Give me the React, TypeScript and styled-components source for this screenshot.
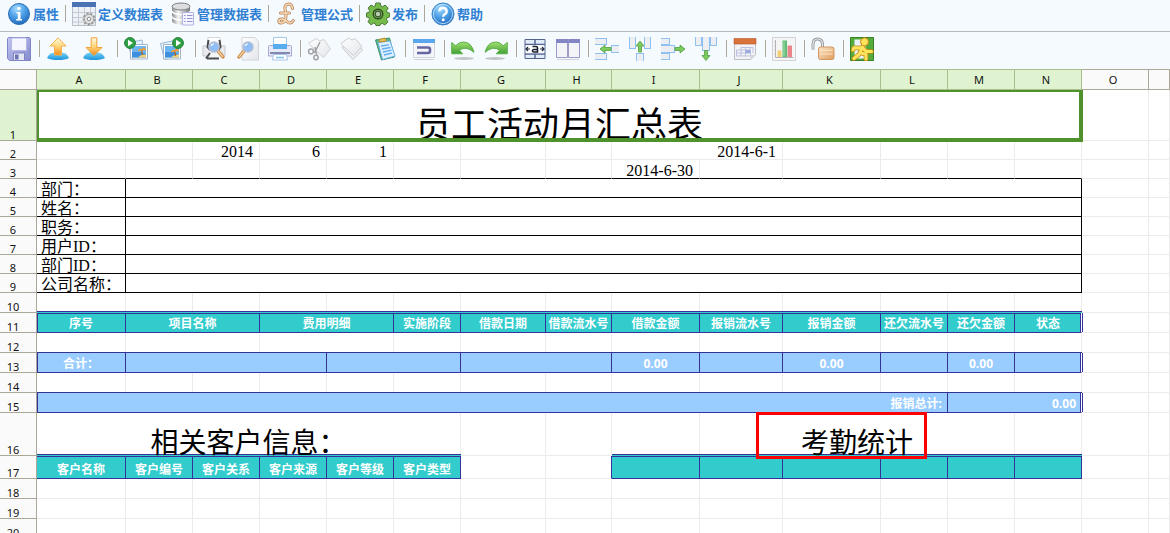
import React from "react";
import styled, { createGlobalStyle, css } from "styled-components";

const INK = "#333399";
const TEAL = "#33cccc";
const SKY = "#99ccff";
const GRID = "#ebebeb";
const HEAD_LINE = "#aca899";

const GlobalStyle = createGlobalStyle`
  *, *::before, *::after { box-sizing: border-box; }
  body { margin: 0; background: #fff; }
`;

const Page = styled.div`
  position: relative;
  display: flex;
  flex-direction: column;
  height: 100vh;
  overflow: hidden;
  font-family: "Noto Sans", "Noto Sans CJK SC", sans-serif;
`;

const MenuBar = styled.nav`
  display: flex;
  align-items: center;
  flex: none;
  height: 32px;
  padding: 0 7px 4px;
  background: #f5faff;
  border-bottom: 1px solid #b4b9c0;
`;

const ToolBar = styled.div`
  display: flex;
  align-items: center;
  flex: none;
  height: 37px;
  padding: 0 7px 4px;
  background: #f5faff;
`;

const Divider = styled.span<{ $before?: number }>`
  flex: none;
  width: 1px;
  height: 17px;
  margin: 0 6px 0 ${(p) => p.$before ?? 6}px;
  background: #aca899;
`;

const MenuButton = styled.button`
  display: flex;
  align-items: center;
  flex: none;
  gap: 2px;
  height: 24px;
  padding: 0;
  border: 0;
  background: none;
  color: #2f7fd2;
  font: bold 13px/24px "Noto Sans CJK SC", sans-serif;
  white-space: nowrap;
  cursor: pointer;
`;

const MenuGroup = styled.div`
  display: flex;
  flex: none;
  gap: 8px;
`;

const ToolGroup = styled.div<{ $gap?: number }>`
  display: flex;
  flex: none;
  gap: ${(p) => p.$gap ?? 9}px;
`;

const ToolButton = styled.button`
  display: block;
  width: 24px;
  height: 24px;
  padding: 0;
  border: 0;
  background: none;
  cursor: pointer;
`;

const Glyph = styled.svg`
  display: block;
  width: 24px;
  height: 24px;
`;

const SharedDefs = styled.svg`
  display: block;
  width: 0;
  height: 0;
`;

const SheetArea = styled.main`
  flex: 1;
  min-height: 0;
  overflow: hidden;
`;

const Sheet = styled.table`
  width: 100%;
  min-width: 1150px;
  table-layout: fixed;
  border-collapse: separate;
  border-spacing: 0;
`;

const headCell = css<{ $active?: boolean }>`
  background: ${(p) => (p.$active ? "#dff3d0" : "#fafafa")};
  border-right: 1px solid ${HEAD_LINE};
  border-bottom: 1px solid ${HEAD_LINE};
  color: #111;
  font: 11px/12px "Noto Sans", sans-serif;
  text-align: center;
`;

const ColHead = styled.th<{ $active?: boolean }>`
  ${headCell}
  height: 21px;
  padding: 0 4px 0 0;
  border-top: 1px solid ${(p) => (p.$active ? "#a9bd8d" : HEAD_LINE)};
  border-bottom-color: ${(p) => (p.$active ? "#a9bd8d" : HEAD_LINE)};
  border-right-color: ${(p) => (p.$active ? "#a9bd8d" : HEAD_LINE)};
`;

const RowHead = styled.th<{ $active?: boolean }>`
  ${headCell}
  padding: 0 10px 0 0;
  line-height: 10px;
  vertical-align: bottom;
`;

const Row = styled.tr<{ $height: number }>`
  height: ${(p) => p.$height}px;
`;

type Kind = "plain" | "title" | "heading" | "value" | "label" | "form" | "head" | "total";

interface CellStyle {
  $kind: Kind;
  $align: "left" | "center" | "right";
  $line: string;
  $first: boolean;
  $last: boolean;
  $doubleEdge: boolean;
}

const boldText = css`
  padding-bottom: 2px;
  border-color: ${INK};
  color: #fff;
  font: bold 12px/12px "Open Sans", "Noto Sans CJK SC", sans-serif;
`;

const kindStyles = {
  plain: css``,
  title: css`
    font: 36px/36px "Noto Sans CJK SC", sans-serif;
    position: relative;
    &::after {
      content: "";
      position: absolute;
      inset: 0 -2px -2px 0;
      border: solid #4f912b;
      border-width: 2px 4px 4px 2px;
    }
  `,
  heading: css`
    font: 28px/28px "Noto Sans CJK SC", sans-serif;
  `,
  value: css`
    font: 16px/14px "Liberation Serif", serif;
    padding-right: 6px;
  `,
  label: css`
    font: 16px/14px "Liberation Serif", "Noto Sans CJK SC", sans-serif;
    padding-left: 4px;
    border-color: #000;
  `,
  form: css`
    border-color: #000;
  `,
  head: css`
    ${boldText}
    background: ${TEAL};
  `,
  total: css`
    ${boldText}
    background: ${SKY};
  `,
};

const edgeLines = (p: CellStyle) => {
  const lines: string[] = [];
  if (p.$kind === "head") lines.push(`inset 0 1px ${INK}`, `0 -1px ${TEAL}`, `0 -2px ${INK}`);
  if (p.$kind === "total") lines.push(`0 -1px ${INK}`);
  if (p.$doubleEdge && p.$first) lines.push(`inset 1px 0 ${INK}`);
  if (p.$doubleEdge && p.$last) lines.push(`inset -1px 0 ${INK}`, `1px 0 ${INK}`);
  return lines.length ? lines.join(", ") : "none";
};

const Cell = styled.td<CellStyle>`
  padding: 0;
  border-style: solid;
  border-width: 0 1px 1px 0;
  border-color: ${(p) => p.$line};
  color: #000;
  text-align: ${(p) => p.$align};
  vertical-align: bottom;
  white-space: nowrap;
  ${(p) => kindStyles[p.$kind]}
  ${(p) => p.$kind === "value" && `border-color: ${p.$line};`}
  ${(p) => p.$kind === "total" && p.$align === "right" && "padding-right: 5px;"}
  ${(p) => p.$doubleEdge && p.$last && "border-right-color: #fff;"}
  box-shadow: ${edgeLines};
`;

const Marker = styled.div`
  position: absolute;
  left: 756px;
  top: 412px;
  width: 171px;
  height: 47px;
  border: 3px solid #f00;
  pointer-events: none;
`;

/* ---------- icons ---------- */

const Defs = () => (
  <SharedDefs aria-hidden="true">
    <defs>
      <radialGradient id="ball" cx=".4" cy=".25" r=".8">
        <stop offset="0" stopColor="#a8dcff" />
        <stop offset=".5" stopColor="#4b9fe6" />
        <stop offset="1" stopColor="#1f66b8" />
      </radialGradient>
      <linearGradient id="sun" x1="0" y1="0" x2="0" y2="1">
        <stop offset="0" stopColor="#fffbe0" />
        <stop offset=".5" stopColor="#ffd679" />
        <stop offset="1" stopColor="#f58a1c" />
      </linearGradient>
      <linearGradient id="dome" x1="0" y1="0" x2="0" y2="1">
        <stop offset="0" stopColor="#7fd4f8" />
        <stop offset="1" stopColor="#1b94dc" />
      </linearGradient>
      <linearGradient id="leaf" x1="0" y1="0" x2="0" y2="1">
        <stop offset="0" stopColor="#a4e070" />
        <stop offset="1" stopColor="#3f9f35" />
      </linearGradient>
      <linearGradient id="metal" x1="0" y1="0" x2="1" y2="0">
        <stop offset="0" stopColor="#8d8f92" />
        <stop offset=".35" stopColor="#f4f4f4" />
        <stop offset="1" stopColor="#77797c" />
      </linearGradient>
      <linearGradient id="paper" x1="0" y1="0" x2="1" y2="1">
        <stop offset="0" stopColor="#ffffff" />
        <stop offset="1" stopColor="#e3e5e9" />
      </linearGradient>
      <linearGradient id="lilac" x1="0" y1="0" x2="1" y2="1">
        <stop offset="0" stopColor="#c3c6f4" />
        <stop offset="1" stopColor="#8389cc" />
      </linearGradient>
      <linearGradient id="peach" x1="0" y1="0" x2="1" y2="1">
        <stop offset="0" stopColor="#fde8cc" />
        <stop offset="1" stopColor="#e09a5c" />
      </linearGradient>
    </defs>
  </SharedDefs>
);

const Lens = ({ x, y, flip }: { x: number; y: number; flip?: boolean }) => {
  const s = flip ? -1 : 1;
  return (
    <g>
      <path d={`M${x + 4 * s} ${y + 4}L${x + 9 * s} ${y + 10}`} stroke="#c98441" strokeWidth="3.4" strokeLinecap="round" />
      <path d={`M${x + 4 * s} ${y + 4}L${x + 9 * s} ${y + 10}`} stroke="#f8d3a3" strokeWidth="1.4" />
      <circle cx={x} cy={y} r="5" fill="#8fbdf7" stroke="#b4bfd6" strokeWidth="1.6" />
      <path d={`M${x - 3} ${y - 1}a3 3 0 0 1 3-2`} stroke="#fff" strokeWidth="1.2" />
    </g>
  );
};

const Palm = () => (
  <>
    <path d="M18.5 18l-.8-5" stroke="#b56a22" strokeWidth="1.4" />
    <path d="M14.500 14q1-3 3.200-1.500Q19.500 9.500 22 13q-2-1-4 0-2-.5-3.500 1z" fill="#f59d2d" stroke="#f59d2d" />
  </>
);

const PlayBadge = ({ x }: { x: number }) => (
  <>
    <circle cx={x} cy="6" r="5.4" fill="#2fa044" stroke="#1c7c30" />
    <path d={`M${x - 2} 2.800v6.400l5-3.200z`} fill="#fff" />
  </>
);

const Bar = ({ x, y, w, h }: { x: number; y: number; w: number; h: number }) => (
  <rect x={x + 0.5} y={y + 0.5} width={w - 1} height={h - 1} fill="#eceef2" stroke="#8fc0f2" />
);

const manBody = "M12.500 11L3.800 10.800 3 13M12.500 11l4 3.500h5M12.500 10l-3 7L4 21.500M10 15.500l6 2v4.500";

const shapes: Record<string, React.ReactNode> = {
  info: (
    <>
      <circle cx="12" cy="12" r="10.500" fill="url(#ball)" stroke="#2a6fb8" />
      <circle cx="12" cy="6.500" r="1.700" fill="#fff" />
      <path d="M9.500 10h4v7h1.500v1.500H9.200V17h1.600v-5.500H9.500z" fill="#fff" />
    </>
  ),
  help: (
    <>
      <circle cx="12" cy="12" r="11" fill="url(#ball)" stroke="#3b83c9" />
      <circle cx="12" cy="12" r="9.600" stroke="#cfeaff" strokeWidth=".8" />
      <path d="M8.300 9.300Q8.500 6 12 6t3.700 3.200q0 2-2 3.100-1.500.9-1.500 2.400" stroke="#fff" strokeWidth="2.400" />
      <circle cx="12.200" cy="17.800" r="1.500" fill="#fff" />
    </>
  ),
  defineTable: (
    <>
      <path d="M.5.500h23v23H.500z" fill="#eef1f5" stroke="#b7bfca" />
      <path d="M0 0h24v5H0z" fill="#4a74b4" />
      <path d="M1 10.500h22M1 15.500h22M1 20h22M6.500 5v18M12.500 5v18M18.500 5v18" stroke="#c3cad3" />
      <circle cx="17" cy="17" r="5.400" fill="#dcdcdc" stroke="#979797" strokeWidth="2" strokeDasharray="2.200 1.500" />
      <circle cx="17" cy="17" r="4.600" fill="#e6e6e6" stroke="#a8a8a8" />
      <circle cx="17" cy="17" r="1.800" fill="#fff" stroke="#8b8b8b" />
    </>
  ),
  database: (
    <>
      <path d="M1 4v15c0 2 4 3.500 9 3.500s9-1.500 9-3.500V4z" fill="url(#metal)" />
      <path d="M1 9c0 2 4 3.500 9 3.500S19 11 19 9M1 14.500C1 16.500 5 18 10 18s9-1.500 9-3.500" stroke="#fff" strokeWidth="1.600" />
      <ellipse cx="10" cy="4.500" rx="9" ry="3.500" fill="#dcdddf" stroke="#7d7f82" />
      <path d="M11.500 10.500h11v12.500h-11z" fill="#f4f4ff" stroke="#b4b4e0" />
      <path d="M13 13.500h1.500M16 13.500h5.500M13 16.500h1.500M16 16.500h5.500M13 19.500h1.500M16 19.500h5.500" stroke="#9494cc" />
    </>
  ),
  pound: (
    <>
      <path d="M17.500 6.500Q17 2 13.500 2 9.500 2 10 7q1.500 5 .8 9-1 5-5 5-2-.2-2-2 .5-2.500 3.500-2 3 .8 6 3.500 3 1.500 5-2M5.500 11h9" stroke="#b98254" strokeWidth="3" strokeLinecap="round" />
      <path d="M17.500 6.500Q17 2 13.500 2 9.500 2 10 7q1.500 5 .8 9-1 5-5 5-2-.2-2-2 .5-2.500 3.500-2 3 .8 6 3.500 3 1.500 5-2M5.500 11h9" stroke="#f6d9b6" strokeWidth="1.500" strokeLinecap="round" />
    </>
  ),
  gear: (
    <>
      <path d="M9.800 1h4.400l.7 3 1.600.7 2.700-1.600 3 3-1.700 2.700.7 1.600 2.500.7v3.800l-2.600.8-.7 1.600 1.500 2.700-3 3-2.700-1.600-1.600.6-.6 1.500H10l-.8-1.800-1.600-.6L5 22.800l-3-3 1.500-2.600-.7-1.600L.5 15v-4l2.500-.7.600-1.600L2.100 6l3-3 2.600 1.600L9.200 4z" fill="#74bb4b" stroke="#4b7a34" />
      <circle cx="12" cy="12" r="4.800" fill="#7fc454" stroke="#2f4a26" strokeWidth="1.400" />
      <circle cx="12" cy="12" r="2.800" fill="#b9cdb0" stroke="#3c5432" strokeWidth="1.200" />
    </>
  ),
  save: (
    <>
      <path d="M1.500.500h21l1 1v22h-21l-2-2v-20z" fill="url(#lilac)" stroke="#7f85c6" />
      <path d="M4.500 1h15v12.500h-15z" fill="#f4f5ff" stroke="#b3b7e6" />
      <path d="M6.500 16h11v7.500h-11z" fill="#e4e6f4" stroke="#8085c4" />
      <path d="M8 17.500h3.500v5H8z" fill="#6c72b4" />
    </>
  ),
  up: (
    <>
      <path d="M1 21q2-6 11-6t11 6q-4 2-11 2T1 21z" fill="url(#dome)" />
      <path d="M12 .8l8 8.200h-4.500v9h-7V9H4z" fill="url(#sun)" stroke="#f4b04c" />
    </>
  ),
  down: (
    <>
      <path d="M1 21q2-6 11-6t11 6q-4 2-11 2T1 21z" fill="url(#dome)" />
      <path d="M12 18.500L4 10.500h5.200V.8h5.600v9.700H20z" fill="url(#sun)" stroke="#f0a23c" />
    </>
  ),
  playLeft: (
    <>
      <path d="M4 6l14-3 3 16-13 3z" fill="#e8f3fd" stroke="#9ab7d4" />
      <path d="M6.500 7.500h17v14.500h-17z" fill="#fff" stroke="#a3b4c6" />
      <path d="M8 9h14v11.500H8z" fill="#6db6f2" />
      <path d="M8 15h8l6 2v3.500H8z" fill="#3e8fdd" />
      <path d="M14 20.500q3-3.500 8-3v3z" fill="#f2d37c" />
      <Palm />
      <PlayBadge x={6} />
    </>
  ),
  playRight: (
    <>
      <path d="M.5 6.500l14-3 3 16-13 3z" fill="#e8f3fd" stroke="#9ab7d4" />
      <path d="M3.500 7.500h17v14.500h-17z" fill="#fff" stroke="#a3b4c6" />
      <path d="M5 9h14v11.500H5z" fill="#6db6f2" />
      <path d="M5 15h8l6 2v3.500H5z" fill="#3e8fdd" />
      <path d="M11 20.500q3-3.500 8-3v3z" fill="#f2d37c" />
      <g transform="translate(-3 1)">
        <Palm />
      </g>
      <PlayBadge x={18} />
    </>
  ),
  preview: (
    <>
      <path d="M1 9h22v10H1z" fill="#e8eaee" stroke="#c5c8ce" />
      <path d="M6 .500h12V11H6z" fill="#fff" stroke="#d4d7dc" />
      <path d="M5 21l3-5h8l3 5z" fill="#f2f4f6" />
      <path d="M6.500 3L5.500 10l2.500 3M17.500 3l1 7-2.500 3M4 21.500l4-5.500M19 16l1 3M5 21.500h12" stroke="#4a4c50" strokeWidth="2" />
      <Lens x={12} y={10} />
    </>
  ),
  zoomPage: (
    <>
      <path d="M7 .5h13l3.500 4V23H7z" fill="url(#paper)" stroke="#d2d4d8" />
      <Lens x={13} y={10} flip />
    </>
  ),
  print: (
    <>
      <path d="M5.500.500h13v9h-13z" fill="#fff" stroke="#a9c6e6" />
      <path d="M1.500 8.500h21q1 0 1 1V19h-23V9.500q0-1 1-1z" fill="#e6eaf8" stroke="#a5add2" />
      <path d="M5 7h14v5H5z" fill="#56aef0" />
      <path d="M2 15h20v2H2z" fill="#8188b4" />
      <path d="M5.500 17.500h13l1 5.500h-15z" fill="#fff" stroke="#a9c6e6" />
      <path d="M8 20.500h8" stroke="#7cc0f0" strokeWidth="1.500" />
    </>
  ),
  cut: (
    <>
      <path d="M1.500 6l8-4.500 3 2.500L17 2.500l6.500 9.500-7 8.500L5 10z" fill="url(#paper)" stroke="#cfd0d3" />
      <path d="M13 5L7.500 16M8 10l2 9" stroke="#9da0a4" strokeWidth="1.400" />
      <circle cx="4" cy="14.500" r="2.400" stroke="#a2a4a8" strokeWidth="1.500" />
      <circle cx="9" cy="20.500" r="2.200" stroke="#a2a4a8" strokeWidth="1.500" />
      <path d="M6 15l3-1" stroke="#a2a4a8" strokeWidth="1.400" />
    </>
  ),
  copy: (
    <>
      <path d="M2 10.500l11 12L22.500 13l-2.500-3-8-4z" fill="#eeeff0" stroke="#c6c7ca" />
      <path d="M1 6.500L8.500 1 12 3l3-1.500L22 9.500l-8.500 9L3 9z" fill="url(#paper)" stroke="#cbccd0" />
    </>
  ),
  paste: (
    <>
      <path d="M2.500 3l14-2 5 19-13 3z" fill="#59b78a" stroke="#3d946c" />
      <path d="M5 5.500l12-1.500 5 15-12.500 3.500z" fill="#dff0ff" stroke="#6db0ea" />
      <path d="M8 9l8-1.200M9 12l8.500-1.500M10 15l8.500-1.800M11 18l8-2" stroke="#62aef0" strokeWidth="1.300" />
      <path d="M6 2.500l6-1.500 1.500 3-7 1z" fill="#e7c25a" stroke="#b9922e" />
    </>
  ),
  link: (
    <>
      <path d="M1.500 2.500h21v18h-21z" fill="#f4f5f8" stroke="#d3d6de" />
      <path d="M1 2h22v4H1z" fill="#58a7ee" />
      <path d="M5 10.500h11q2 0 2 2v1.500q0 2-2 2H5" stroke="#6668a4" strokeWidth="2.600" />
      <path d="M2 22.500h20" stroke="#d0d3da" />
    </>
  ),
  undo: (
    <>
      <ellipse cx="13" cy="21.500" rx="10" ry="1.500" fill="#c2c5c8" />
      <path d="M.7 5.500v11.300h11L8.500 13.300q6-5 14.500 2Q20.500 5 12 5 8 5 4.800 8.800z" fill="url(#leaf)" stroke="#5cb04a" />
    </>
  ),
  redo: (
    <>
      <ellipse cx="11" cy="21.500" rx="10" ry="1.500" fill="#c2c5c8" />
      <path d="M23.300 5.500v11.300h-11l3.200-3.500q-6-5-14.500 2Q3.500 5 12 5q4 0 7.200 3.800z" fill="url(#leaf)" stroke="#5cb04a" />
    </>
  ),
  merge: (
    <>
      <path d="M2 2.500h20v19H2z" fill="#e2ebfa" stroke="#53648f" />
      <path d="M2 7.500h20M2 17h20M12 2v5.500M12 17v5" stroke="#53648f" strokeWidth="1.500" />
      <path d="M2.800 8.200h18.400v8H2.800z" fill="#fff" />
      <path d="M3 12h4M5 10l-2 2 2 2M21 12h-4M19 10l2 2-2 2" stroke="#222b40" strokeWidth="1.200" />
      <path d="M9.500 9.500h3.500q1.500 0 1.500 1.500v4H11q-1.500 0-1.500-1.300T11 12.500h3" stroke="#1c2233" strokeWidth="1.600" />
    </>
  ),
  split: (
    <>
      <path d="M.5 2.500h11v18H.500zM12.500 2.500h11v18h-11z" fill="#f3f4f8" stroke="#9a9acb" />
      <path d="M0 2h12v4H0zM12.500 2H24v4H12.500z" fill="#8385c4" />
      <path d="M1 22.500h22" stroke="#cfd1dc" />
    </>
  ),
  insertRowLeft: (
    <>
      <Bar x={-2} y={1} w={14} h={7} />
      <Bar x={-2} y={16} w={14} h={7} />
      <Bar x={16} y={8} w={10} h={8} />
      <path d="M5 12l5-4v2.500h6v3h-6V16z" fill="#7ccb5c" stroke="#4f9f42" strokeWidth=".8" />
    </>
  ),
  insertColUp: (
    <>
      <Bar x={1} y={-2} w={7} h={14} />
      <Bar x={16} y={-2} w={7} h={14} />
      <Bar x={8} y={16} w={8} h={10} />
      <path d="M12 4l4 5h-2.500v6h-3V9H8z" fill="#7ccb5c" stroke="#4f9f42" strokeWidth=".8" />
    </>
  ),
  removeRow: (
    <>
      <Bar x={-2} y={1} w={11} h={7} />
      <Bar x={-2} y={16} w={11} h={7} />
      <Bar x={-2} y={8} w={16} h={8} />
      <path d="M24 12l-5-4v2.500h-5v3h5V16z" fill="#7ccb5c" stroke="#4f9f42" strokeWidth=".8" />
    </>
  ),
  removeCol: (
    <>
      <Bar x={1} y={-2} w={7} h={11} />
      <Bar x={16} y={-2} w={7} h={11} />
      <Bar x={8} y={-2} w={8} h={16} />
      <path d="M12 23.500l4-5h-2.500v-5h-3v5H8z" fill="#7ccb5c" stroke="#4f9f42" strokeWidth=".8" />
    </>
  ),
  calendar: (
    <>
      <path d="M1.500 2.500h21V18l-5 4.500h-16z" fill="#f3f3f5" stroke="#bdbdc2" />
      <path d="M1 1.500h22V7H1z" fill="#d9733a" stroke="#b9572a" strokeWidth=".6" />
      <path d="M3.500 13h14v6h-14zM3.500 16h14M8 10.500V19M12.500 10.500V19M17 10.500V16M8 10.500h12V16" stroke="#b6bcde" strokeWidth=".9" />
      <path d="M12.500 13H17v3h-4.500z" fill="#9aa8e0" />
      <path d="M17.500 22.500V18h5z" fill="#d5d5da" />
    </>
  ),
  chart: (
    <>
      <path d="M.5.500h23v23H.500z" fill="#f5f5f6" stroke="#d3d3d6" />
      <path d="M3.500 3v17.500h18M2.500 5h1M2.500 9h1M2.500 13h1M2.500 17h1" stroke="#b3b3b7" />
      <path d="M5.500 13.500h4V20h-4z" fill="#f5cf74" />
      <path d="M10.500 3.500h4.500V20h-4.500z" fill="#5fbd77" />
      <path d="M15.500 8.500h4.500V20h-4.500z" fill="#e8868c" />
      <path d="M12 4.500V19" stroke="#a7e2b4" />
    </>
  ),
  unlock: (
    <>
      <path d="M2 12.500V7.500Q2 2 6.500 2t5 5v5" stroke="#96989c" strokeWidth="3" />
      <path d="M2 12V7.500Q2 2 6.500 2t5 5v4" stroke="#e8e9eb" strokeWidth="1.200" />
      <rect x="7.500" y="10" width="15.500" height="12.500" rx="2" fill="url(#peach)" stroke="#d39763" />
      <path d="M9 13.500h12.500M9 17h12.500" stroke="#fbe3c4" />
    </>
  ),
  run: (
    <>
      <path d="M.5.500h23v23H.500z" fill="#54ab3c" stroke="#388326" />
      <path d="M4.500 2.500h11v19h-11z" fill="#eaf3fa" />
      <path d={manBody} stroke="#c9870c" strokeWidth="4.600" strokeLinecap="round" strokeLinejoin="round" />
      <circle cx="14.500" cy="4.800" r="4" fill="#fde45c" stroke="#c9870c" />
      <path d={manBody} stroke="#fde45c" strokeWidth="3" strokeLinecap="round" strokeLinejoin="round" />
    </>
  ),
};

const Icon = ({ name }: { name: string }) => (
  <Glyph viewBox="0 0 24 24" fill="none" aria-hidden="true">
    {shapes[name]}
  </Glyph>
);

/* ---------- data ---------- */

const menu: [string, string][][] = [
  [["info", "属性"]],
  [
    ["defineTable", "定义数据表"],
    ["database", "管理数据表"],
  ],
  [["pound", "管理公式"]],
  [["gear", "发布"]],
  [["help", "帮助"]],
];

const tools: { wide?: boolean; items: [string, string][] }[] = [
  { items: [["save", "保存"]] },
  { wide: true, items: [["up", "上传"], ["down", "下载"]] },
  { wide: true, items: [["playLeft", "上一张"], ["playRight", "下一张"]] },
  { items: [["preview", "打印预览"], ["zoomPage", "页面预览"], ["print", "打印"]] },
  { items: [["cut", "剪切"], ["copy", "复制"], ["paste", "粘贴"]] },
  { items: [["link", "超链接"]] },
  { items: [["undo", "撤销"], ["redo", "重做"]] },
  { items: [["merge", "合并单元格"], ["split", "拆分单元格"]] },
  { items: [["insertRowLeft", "插入行"], ["insertColUp", "插入列"], ["removeRow", "删除行"], ["removeCol", "删除列"]] },
  { items: [["calendar", "日期"]] },
  { items: [["chart", "图表"]] },
  { items: [["unlock", "解锁"]] },
  { items: [["run", "运行"]] },
];

const columns: [string, number][] = [
  ["A", 89], ["B", 67], ["C", 67], ["D", 67], ["E", 67], ["F", 67], ["G", 85], ["H", 66],
  ["I", 88], ["J", 83], ["K", 98], ["L", 67], ["M", 67], ["N", 67], ["O", 67],
];
const LAST_DATA_COLUMN = 14;
const TOTAL_COLUMNS = 16;

interface CellData {
  text?: string;
  span?: number;
  kind?: Kind;
  align?: "left" | "center" | "right";
}
interface RowData {
  height: number;
  cells?: CellData[];
  underline?: string;
  doubleEdge?: boolean;
}

const blank = (count: number): CellData[] => Array.from({ length: count }, () => ({}));
const head = (text = "", span = 1): CellData => ({ text, span, kind: "head" });
const total = (text = "", span = 1, align: CellData["align"] = "center"): CellData => ({ text, span, kind: "total", align });
const value = (text: string, span = 1): CellData => ({ text, span, kind: "value", align: "right" });
const formRow = (text: string): RowData => ({
  height: 19,
  cells: [{ text, kind: "label", align: "left" }, { span: 13, kind: "form" }],
});

const rows: RowData[] = [
  { height: 51, cells: [{ text: "员工活动月汇总表", span: 14, kind: "title" }] },
  { height: 19, cells: [...blank(2), value("2014"), value("6"), value("1"), ...blank(3), value("2014-6-1", 2)] },
  { height: 19, underline: "#000", cells: [...blank(8), value("2014-6-30")] },
  formRow("部门："),
  formRow("姓名："),
  formRow("职务："),
  formRow("用户ID："),
  formRow("部门ID："),
  formRow("公司名称："),
  { height: 20 },
  {
    height: 20,
    doubleEdge: true,
    cells: [
      head("序号"), head("项目名称", 2), head("费用明细", 2), head("实施阶段"), head("借款日期"), head("借款流水号"),
      head("借款金额"), head("报销流水号"), head("报销金额"), head("还欠流水号"), head("还欠金额"), head("状态"),
    ],
  },
  { height: 20, cells: [{}, { span: 2 }, { span: 2 }] },
  {
    height: 20,
    doubleEdge: true,
    cells: [
      total("合计："), total("", 3), total("", 2), total("", 2), total("0.00"), total(), total("0.00"), total(),
      total("0.00"), total(),
    ],
  },
  { height: 20 },
  { height: 20, doubleEdge: true, cells: [total("报销总计:", 12, "right"), total("0.00", 2, "right")] },
  {
    height: 43,
    cells: [{ text: "相关客户信息：", span: 6, kind: "heading" }, ...blank(3), { text: "考勤统计", span: 4, kind: "heading" }],
  },
  {
    height: 23,
    cells: [
      head("客户名称"), head("客户编号"), head("客户关系"), head("客户来源"), head("客户等级"), head("客户类型"),
      ...blank(2), head(), head(), head(), head(), head(), head(),
    ],
  },
  { height: 20 },
  { height: 20 },
  { height: 20 },
];

const fillRow = (cells: CellData[] = []) => {
  const used = cells.reduce((sum, c) => sum + (c.span ?? 1), 0);
  return [...cells, ...blank(TOTAL_COLUMNS - used)];
};

const SheetRow = ({ row, index }: { row: RowData; index: number }) => {
  let start = 0;
  const cells = fillRow(row.cells);
  return (
    <Row $height={row.height}>
      <RowHead scope="row" $active={index === 0}>
        {index + 1}
      </RowHead>
      {cells.map((cell, i) => {
        const from = start;
        start += cell.span ?? 1;
        const inData = start <= LAST_DATA_COLUMN;
        const right = !cell.kind && cells[i + 1]?.kind === "head" ? INK : GRID;
        const bottom = inData && row.underline ? row.underline : GRID;
        return (
          <Cell
            key={i}
            colSpan={cell.span ?? 1}
            $kind={cell.kind ?? "plain"}
            $align={cell.align ?? "center"}
            $line={`${GRID} ${right} ${bottom}`}
            $first={from === 0}
            $last={start === LAST_DATA_COLUMN}
            $doubleEdge={!!row.doubleEdge}
          >
            {cell.text}
          </Cell>
        );
      })}
    </Row>
  );
};

export default function App() {
  return (
    <Page lang="zh-CN">
      <GlobalStyle />
      <Defs />
      <MenuBar>
        {menu.map((group, i) => (
          <React.Fragment key={i}>
            {i > 0 && <Divider />}
            <MenuGroup>
              {group.map(([icon, label]) => (
                <MenuButton key={icon} type="button">
                  <Icon name={icon} />
                  {label}
                </MenuButton>
              ))}
            </MenuGroup>
          </React.Fragment>
        ))}
      </MenuBar>
      <ToolBar role="toolbar">
        {tools.map((group, i) => (
          <React.Fragment key={i}>
            {i > 0 && <Divider $before={tools[i - 1].wide ? 11 : 8} />}
            <ToolGroup $gap={group.wide ? 12 : 9}>
              {group.items.map(([icon, label]) => (
                <ToolButton key={icon} type="button" aria-label={label}>
                  <Icon name={icon} />
                </ToolButton>
              ))}
            </ToolGroup>
          </React.Fragment>
        ))}
      </ToolBar>
      <SheetArea>
        <Sheet>
          <colgroup>
            <col width={37} />
            {columns.map(([name, width]) => (
              <col key={name} width={width} />
            ))}
            <col />
          </colgroup>
          <thead>
            <tr>
              <ColHead />
              {columns.map(([name], i) => (
                <ColHead key={name} scope="col" $active={i < LAST_DATA_COLUMN}>
                  {name}
                </ColHead>
              ))}
              <ColHead />
            </tr>
          </thead>
          <tbody>
            {rows.map((row, i) => (
              <SheetRow key={i} row={row} index={i} />
            ))}
          </tbody>
        </Sheet>
      </SheetArea>
      <Marker />
    </Page>
  );
}
